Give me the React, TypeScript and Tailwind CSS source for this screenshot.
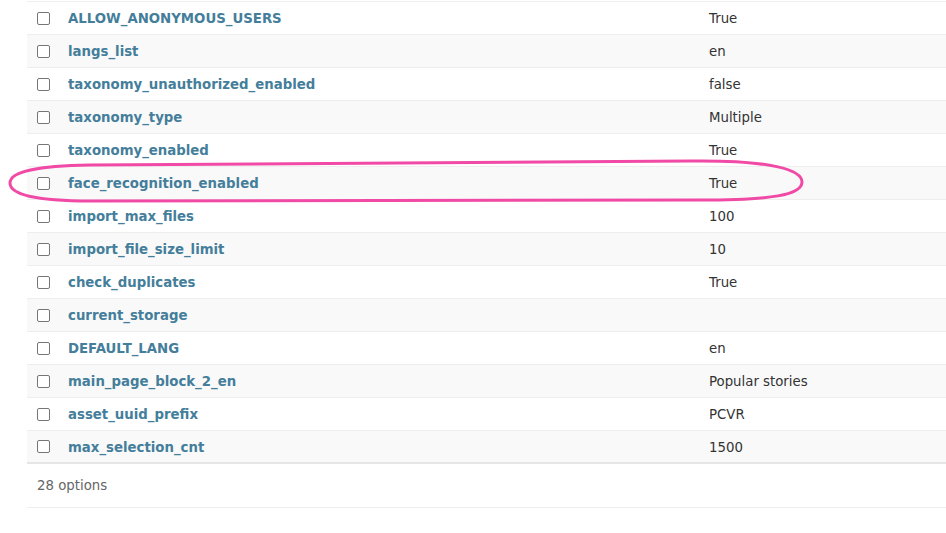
import React from "react";

const rows: [string, string][] = [
  ["ALLOW_ANONYMOUS_USERS", "True"],
  ["langs_list", "en"],
  ["taxonomy_unauthorized_enabled", "false"],
  ["taxonomy_type", "Multiple"],
  ["taxonomy_enabled", "True"],
  ["face_recognition_enabled", "True"],
  ["import_max_files", "100"],
  ["import_file_size_limit", "10"],
  ["check_duplicates", "True"],
  ["current_storage", ""],
  ["DEFAULT_LANG", "en"],
  ["main_page_block_2_en", "Popular stories"],
  ["asset_uuid_prefix", "PCVR"],
  ["max_selection_cnt", "1500"],
];

export default function App() {
  return (
    <div
      className="relative w-[946px] h-[533px] overflow-hidden bg-white text-[13.3px] text-[#333]"
      style={{ fontFamily: '"DejaVu Sans", Verdana, sans-serif' }}
    >
      <div className="ml-[27px] pt-px">
        <div className="border-t border-[#eee]">
          {rows.map(([k, v], i) => (
            <div
              key={k}
              className={`grid grid-cols-[31px_641px_1fr] h-[33px] items-center border-b border-[#eee] ${
                i % 2 === 1 ? "bg-[#f9f9f9]" : "bg-white"
              } ${i === rows.length - 1 ? "border-b-2 border-b-[#e6e6e6]" : ""}`}
            >
              <div className="pl-[10px] flex items-center">
                <span className="block w-[13px] h-[13px] rounded-[2px] border border-[#767676] bg-white" />
              </div>
              <div className="pl-[10px] pt-[2px] font-bold text-[#447e9b]">{k}</div>
              <div className="pl-[10px] pt-[2px]">{v}</div>
            </div>
          ))}
        </div>
        <div className="h-[44px] flex items-center pl-[10px] pt-px text-[#666] border-b border-[#eee]">
          28 options
        </div>
      </div>
      <svg
        className="absolute left-0 top-0 pointer-events-none"
        width="946"
        height="533"
      >
        <path
          d="M10,183 C10,171 38,166 90,165 L690,161 C772,160 802,170 802,182 C802,195 772,200 700,200 L90,201 C38,201 10,195 10,183 Z"
          fill="none"
          stroke="#f04aa6"
          strokeWidth="3"
        />
      </svg>
    </div>
  );
}
